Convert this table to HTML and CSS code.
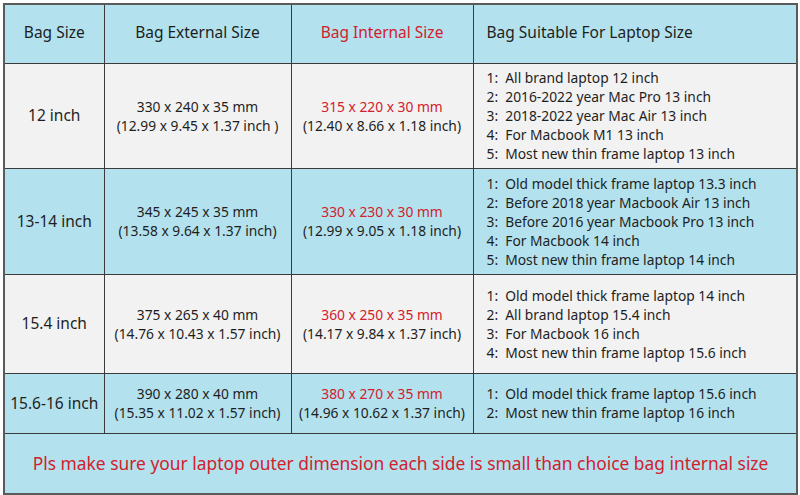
FILE: index.html
```html
<!DOCTYPE html>
<html>
<head>
<meta charset="utf-8">
<link rel="stylesheet" href="styles.css">
</head>
<body>
<table class="sizes">
  <colgroup>
    <col class="c1"><col class="c2"><col class="c3"><col class="c4">
  </colgroup>
  <tr class="head">
    <th>Bag Size</th>
    <th>Bag External Size</th>
    <th class="red">Bag Internal Size</th>
    <th class="left">Bag Suitable For Laptop Size</th>
  </tr>
  <tr class="r1 gray">
    <td class="size">12 inch</td>
    <td>330 x 240 x 35 mm<br>(12.99 x 9.45 x 1.37 inch )</td>
    <td><span class="red">315 x 220 x 30 mm</span><br>(12.40 x 8.66 x 1.18 inch)</td>
    <td class="list">1:&nbsp; All brand laptop 12 inch<br>2:&nbsp; 2016-2022 year Mac Pro 13 inch<br>3:&nbsp; 2018-2022 year Mac Air 13 inch<br>4:&nbsp; For Macbook M1 13 inch<br>5:&nbsp; Most new thin frame laptop 13 inch</td>
  </tr>
  <tr class="r2 blue">
    <td class="size">13-14 inch</td>
    <td>345 x 245 x 35 mm<br>(13.58 x 9.64 x 1.37 inch)</td>
    <td><span class="red">330 x 230 x 30 mm</span><br>(12.99 x 9.05 x 1.18 inch)</td>
    <td class="list">1:&nbsp; Old model thick frame laptop 13.3 inch<br>2:&nbsp; Before 2018 year Macbook Air 13 inch<br>3:&nbsp; Before 2016 year Macbook Pro 13 inch<br>4:&nbsp; For Macbook 14 inch<br>5:&nbsp; Most new thin frame laptop 14 inch</td>
  </tr>
  <tr class="r3 gray">
    <td class="size">15.4 inch</td>
    <td>375 x 265 x 40 mm<br>(14.76 x 10.43 x 1.57 inch)</td>
    <td><span class="red">360 x 250 x 35 mm</span><br>(14.17 x 9.84 x 1.37 inch)</td>
    <td class="list">1:&nbsp; Old model thick frame laptop 14 inch<br>2:&nbsp; All brand laptop 15.4 inch<br>3:&nbsp; For Macbook 16 inch<br>4:&nbsp; Most new thin frame laptop 15.6 inch</td>
  </tr>
  <tr class="r4 blue">
    <td class="size">15.6-16 inch</td>
    <td>390 x 280 x 40 mm<br>(15.35 x 11.02 x 1.57 inch)</td>
    <td><span class="red">380 x 270 x 35 mm</span><br>(14.96 x 10.62 x 1.37 inch)</td>
    <td class="list">1:&nbsp; Old model thick frame laptop 15.6 inch<br>2:&nbsp; Most new thin frame laptop 16 inch</td>
  </tr>
  <tr class="foot blue">
    <td colspan="4" class="note">Pls make sure your laptop outer dimension each side is small than choice bag internal size</td>
  </tr>
</table>
</body>
</html>
```
FILE: styles.css
```css
html, body {
  margin: 0;
  padding: 0;
  background: #ffffff;
}
body {
  padding: 3px 0 0 3px;
  font-family: "Noto Sans", "Open Sans", "Liberation Sans", sans-serif;
  color: #1e1e1e;
}
.sizes {
  width: 793px;
  height: 490px;
  border-collapse: collapse;
  table-layout: fixed;
  border: 2px solid #5a5a5a;
}
.c1 { width: 100px; }
.c2 { width: 187px; }
.c3 { width: 182px; }
.c4 { width: 324px; }
.sizes th, .sizes td {
  border: 1px solid #3a3a3a;
  text-align: center;
  vertical-align: middle;
  padding: 0;
  font-size: 13.8px;
  line-height: 19px;
  font-weight: normal;
}
.sizes th {
  font-size: 15.5px;
  padding-bottom: 3px;
}
.sizes .size {
  font-size: 15.5px;
}
.head { height: 59px; background: #b3e2ee; }
.r1 { height: 105px; }
.r2 { height: 106px; }
.r3 { height: 99px; }
.r4 { height: 60px; }
.foot { height: 61px; }
.gray { background: #f2f2f2; }
.blue { background: #b3e2ee; }
.red { color: #d2202c; }
.sizes .left, .sizes .list {
  text-align: left;
  padding-left: 13px;
}
.sizes .note {
  color: #d2202c;
  font-size: 17.4px;
}
```
